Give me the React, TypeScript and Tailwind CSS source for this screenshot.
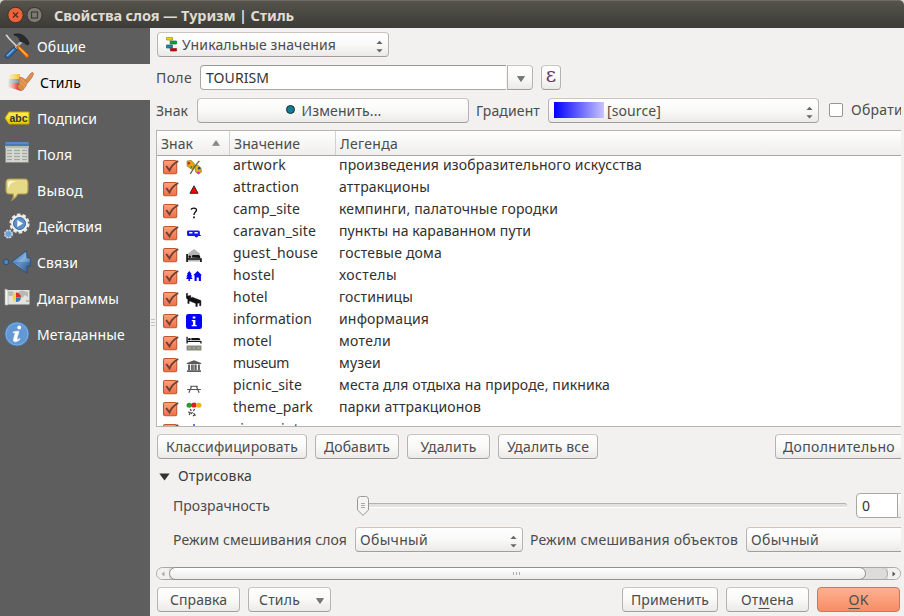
import { useLayoutEffect, useRef, useState, type ReactNode } from "react";

/** A single-line label whose letter spacing is adjusted to fill a given width. */
function Label({ text, w, className = "", children }: { text?: string; w: number; className?: string; children?: ReactNode }) {
  const ref = useRef<HTMLSpanElement>(null);
  const [spacing, setSpacing] = useState(0);
  useLayoutEffect(() => {
    const el = ref.current;
    if (!el) return;
    el.style.letterSpacing = "0px";
    const natural = el.getBoundingClientRect().width;
    const count = (el.textContent || "").length || 1;
    const next = (w - natural) / count;
    el.style.letterSpacing = next + "px";
    setSpacing(next);
  }, [w]);
  return (
    <span ref={ref} style={{ letterSpacing: spacing }} className={"inline-block shrink-0 whitespace-pre " + className}>
      {children ?? text}
    </span>
  );
}

const buttonFace =
  "shrink-0 border border-[#b5b2ae] border-t-[#cbc4be] border-b-[#a19e9a] rounded-[4px] bg-linear-to-b from-white via-[#f9f9f8] to-[#ebeae8] shadow-[0_0_0_1px_#f5f4f3]";

function Button({ className = "", children }: { className?: string; children: ReactNode }) {
  return <div className={`flex h-[25px] items-center justify-center ${buttonFace} ${className}`}>{children}</div>;
}

function Spinner() {
  return (
    <svg className="ml-auto mt-1 h-[13px] w-[7px] shrink-0" viewBox="0 0 7 13" fill="#686562">
      <path d="M0.4 4L3.5 0.8L6.6 4zM0.4 9.2H6.6L3.5 12.4z" />
    </svg>
  );
}

function ToolsIcon() {
  return (
    <svg viewBox="0 0 26 26" className="h-[26px] w-[26px]">
      <path d="M1.5 2.2L3 1.5L5.5 5L14 13.5L13 14.5L4.5 6z" fill="#e3e6e8" stroke="#999" strokeWidth=".5" />
      <path d="M17.8 6.5L19.8 8L12 16.5L10.2 15z" fill="#b9bdbf" />
      <path d="M12.5 14L14.5 12.2L25 22Q25.5 24.5 22.5 25z" fill="#f57900" stroke="#a84900" strokeWidth=".8" />
      <path d="M15 14.5L23 22.5" stroke="#ffb35b" strokeWidth="1.2" />
      <path d="M10 14L13 16.8L4.8 25Q1 26 .8 22.5z" fill="#3267a5" stroke="#173d71" strokeWidth=".8" />
      <path d="M9.8 16.3L3 23" stroke="#79aee2" strokeWidth="1.4" />
      <path d="M10 1.2Q16-.2 20 3L23 6L25 10.5Q24 12.8 22.5 11.5L20 9.5L16 8.5L15 5Q13 2.5 10 2z" fill="#272c2d" stroke="#111" strokeWidth=".5" />
    </svg>
  );
}

function BrushIcon() {
  return (
    <svg viewBox="0 0 26 20" className="h-[20px] w-[26px]">
      <defs>
        <linearGradient id="paint"><stop stopColor="#ff8d83" stopOpacity=".15" /><stop offset=".6" stopColor="#e8453c" /></linearGradient>
        <linearGradient id="yellowPaint"><stop stopColor="#ffdf72" stopOpacity=".3" /><stop offset="1" stopColor="#f4bd2d" /></linearGradient>
        <linearGradient id="bluePaint"><stop stopColor="#8b9aba" stopOpacity=".2" /><stop offset="1" stopColor="#7686ac" /></linearGradient>
      </defs>
      <path d="M2 2H12V7H1z" fill="url(#yellowPaint)" />
      <path d="M1 7H12V11H.5z" fill="url(#bluePaint)" />
      <path d="M.5 11H12L16 16L13 19L0 15z" fill="url(#paint)" />
      <path d="M17 8.5L23 1Q25.5-.5 25.5 2Q24.5 6 19.5 11z" fill="#dc914f" stroke="#b06a34" strokeWidth=".6" />
      <path d="M12 5Q16 5.5 19.5 10L18 14L15 18Q11 19 9.5 14Q12 13 11 9z" fill="#dc8c49" stroke="#b86f38" strokeWidth=".6" />
      <path d="M13 7L18.5 12.5M12 10L17 14.5" stroke="#efb276" strokeWidth=".8" />
    </svg>
  );
}

function LabelTagIcon() {
  return (
    <span className="relative flex h-[14px] w-[26px] items-center">
      <svg viewBox="0 0 26 14" className="absolute inset-0 h-[14px] w-[26px]">
        <defs><linearGradient id="tag" x2="0" y2="1"><stop stopColor="#fff15b" /><stop offset="1" stopColor="#e6cb00" /></linearGradient></defs>
        <path d="M1 7L5 1H25V13H5z" fill="url(#tag)" stroke="#c5a300" />
      </svg>
      <span className="relative ml-[5.5px] -mt-px font-['Liberation_Sans'] text-[10.5px] font-bold leading-[12px] text-[#333]">abc</span>
    </span>
  );
}

function TableIcon() {
  return (
    <svg viewBox="0 0 24 21" className="-mt-[3px] h-[21px] w-6">
      <path d="M.5.5H23.5V20.5H.5z" fill="#cfd1cb" stroke="#8b8d87" />
      <path d="M0 0H24V4H0z" fill="#4779b5" /><path d="M1 1H23" stroke="#6f9fd4" />
      <path d="M0 4H24V6H0z" fill="#b7bab4" />
      <path d="M2 8.5H7M9 8.5H15M17 8.5H22M2 11.5H7M9 11.5H15M17 11.5H22M2 14.5H7M9 14.5H15M17 14.5H22M2 17.5H7M9 17.5H15M17 17.5H22" stroke="#a3a69f" />
      <path d="M8 6V20M16 6V20" stroke="#e4e5e1" strokeWidth=".8" />
    </svg>
  );
}

function BubbleIcon() {
  return (
    <svg viewBox="0 0 24 23" className="-mt-[2px] h-[23px] w-6">
      <path d="M4 1H20Q23 1 23 5V12Q23 16 20 16H13Q11 20 7 22Q9 19 8 16H4Q1 16 1 12V5Q1 1 4 1z" fill="#e6d987" stroke="#ad984c" strokeWidth="1.2" />
      <path d="M3 10V6Q3 3 6 3H12Q5 4 4 9z" fill="#fffbd8" />
    </svg>
  );
}

function ActionsIcon() {
  return (
    <svg viewBox="0 0 26 26" className="h-[26px] w-[26px]">
      <circle cx="15.5" cy="10.5" r="8.8" fill="none" stroke="#e8e8e6" strokeWidth="2.6" strokeDasharray="3.5 2.03" />
      <circle cx="15.5" cy="10.5" r="7.3" fill="#5f91c8" stroke="#eeeeed" strokeWidth="2.4" />
      <circle cx="15.5" cy="10.5" r="6" fill="none" stroke="#3465a4" />
      <path d="M13.3 7L19 10.5L13.3 14z" fill="#fff" />
      <circle cx="4.5" cy="21" r="3.8" fill="#729fcf" stroke="#d6dce3" strokeWidth="1.4" strokeDasharray="2 1" />
      <circle cx="4.5" cy="21" r="3.1" fill="#70a0d1" stroke="#a9c4e0" strokeWidth=".7" />
    </svg>
  );
}

function JoinIcon() {
  return (
    <svg viewBox="0 0 28 24" className="h-6 w-7">
      <defs><linearGradient id="joinBlue" x2="1" y2="1"><stop stopColor="#2b5d9b" /><stop offset=".5" stopColor="#86b2df" /><stop offset="1" stopColor="#28558e" /></linearGradient></defs>
      <circle cx="3.2" cy="12" r="2.7" fill="#5284b9" stroke="#274e7c" />
      <path d="M8.5 12L23.5.8L24 8H27.3V16H24V23.2z" fill="url(#joinBlue)" stroke="#214a7c" strokeWidth=".8" />
      <path d="M10 12H27V16H24V22z" fill="#21508b" opacity=".35" />
    </svg>
  );
}

function DiagramIcon() {
  return (
    <svg viewBox="0 0 26 18" className="-mt-[2px] h-[18px] w-[26px]">
      <path d="M3 2H25.5V16.5H3z" fill="#e2e3dd" />
      <path d="M4 4L8 3L10 5L8 8H5zM14 4L18 2.5L24 4L24 9L21 7L18 10L15 7zM22 12H25V14H22z" fill="#b6b9b1" />
      <path d="M1 1V17H4V2z" fill="#f4f4f1" stroke="#aaa" strokeWidth=".6" />
      <path d="M12 4.5A5 5 0 0 0 12 14z" fill="#f3d450" />
      <path d="M12 4.5A5 5 0 0 1 17 9.5H12z" fill="#dc302d" />
      <path d="M12 9.5H17A5 5 0 0 1 12 14z" fill="#397bb8" />
    </svg>
  );
}

function MetadataIcon() {
  return (
    <svg viewBox="0 0 26 26" className="h-[26px] w-[26px]">
      <circle cx="13" cy="13" r="12" fill="#6498d3" stroke="#3e77b4" />
      <circle cx="13" cy="13" r="11" fill="none" stroke="#82ade0" />
      <circle cx="15.2" cy="6.5" r="1.9" fill="#fff" />
      <path d="M9 11Q12 10 15 10.2L12.8 18.5Q13.5 19 16 17.5L15.5 19Q11 22 9.5 20Q9 19 11.3 11.8H9z" fill="#fff" stroke="#fff" strokeWidth=".5" />
    </svg>
  );
}

const navItems = [
  { label: "Общие", w: 49, icon: <ToolsIcon /> },
  { label: "Стиль", w: 41, icon: <BrushIcon />, selected: true },
  { label: "Подписи", w: 60, icon: <LabelTagIcon /> },
  { label: "Поля", w: 35, icon: <TableIcon /> },
  { label: "Вывод", w: 46, icon: <BubbleIcon /> },
  { label: "Действия", w: 65, icon: <ActionsIcon /> },
  { label: "Связи", w: 41, icon: <JoinIcon /> },
  { label: "Диаграммы", w: 82, icon: <DiagramIcon /> },
  { label: "Метаданные", w: 88, icon: <MetadataIcon /> },
];

const symbols: Record<string, ReactNode> = {
  artwork: (
    <>
      <path d="M1 1L5 .5L8 4L7 9L5 9L1 6z" fill="#dfaa16" stroke="#7b6412" strokeWidth=".6" />
      <path d="M8 6L11 5L14 8L14.5 12L12 14L9 12z" fill="#e2b01a" stroke="#7b6412" strokeWidth=".6" />
      <path d="M12.5 .8L8.5 6L4 14" stroke="#5a5d38" strokeWidth="1.2" />
      <circle cx="2.8" cy="3.3" r="1.2" fill="#d3212f" /><circle cx="12.3" cy="8.3" r="1.2" fill="#213cc0" /><circle cx="11.6" cy="12.8" r="1.3" fill="#df27ce" /><circle cx="5" cy="7" r=".9" fill="#278c35" />
    </>
  ),
  attraction: <path d="M7.5 3.8L11.3 11.3H3.7z" fill="#f00" stroke="#222" strokeWidth=".9" />,
  camp_site: <><path d="M5 5.8Q5.1 4.2 7.4 4.2Q10 4.2 9.8 6.2Q9.6 7.5 8.4 8.4Q7.5 9.1 7.5 11" fill="none" stroke="#111" strokeWidth="1.3" /><path d="M6.7 12.5H8.3V14.2H6.7z" fill="#111" /></>,
  caravan_site: <><path d="M2 4.5H11.5Q13 4.5 13 6V9H14V10H11.5A1.8 1.8 0 0 1 8 10H2Q1 10 1 9V5.5Q1 4.5 2 4.5z" fill="#1414ff" /><path d="M3 6H6V7.5H3zM8 6H11V7.5H8z" fill="#fff" /></>,
  guest_house: <><path d="M2 5.5L7.5 1L13 5.5V13.5H2z" fill="#b4b4b4" /><path d="M1 6V14M1 11H14V14" stroke="#111" strokeWidth="1.6" /><path d="M5.5 9.5L6 7H12Q13.5 7.5 13.5 10z" fill="#111" /><circle cx="3.5" cy="8.8" r="1.2" fill="#111" /></>,
  hostel: <path d="M3 1L5.3 4H4.5L6 6.5H4.7L6.2 9H3.7V11H2.3V9H0L1.5 6.5H.3L1.7 4H.9zM10.8 1L15 5.2H14V11H12V7.5H10V11H8V5.2H6.8z" fill="#00f" />,
  hotel: <path d="M.2 1.5L1.5 1.3V4L4.5 3.4V6L6 5.2L14 8.6V13.7H12.7V10.8L10.6 11.5V14.5H9.2V11.4L3 8.8V11.5H1.7V7.5L.2 6z" fill="#111" stroke="#111" strokeWidth=".4" />,
  information: <><rect width="15" height="15" rx="2.2" fill="#00f" /><path d="M6.3 2.5H8.8V4.5H6.3zM5.4 6H8.8V11H10V12.3H5.3V11H6.5V7.2H5.4z" fill="#fff" /></>,
  motel: <><path d="M1 .8V7.5M1 5.5H14V7.5" stroke="#111" strokeWidth="1.2" /><path d="M5 4.2V2H12Q13.5 2.5 13.5 4.2z" fill="#111" /><circle cx="3.2" cy="3.2" r="1.2" fill="#111" /><path d="M.5 9.5H14.5V14.5H.5z" fill="#888" /><path d="M2 12H4.5M6.5 12H8.5M10.5 12H13" stroke="#d0c64c" strokeWidth=".9" /></>,
  museum: <path d="M.8 5L7.5 2.2L14.2 5V6H.8zM2 6.5H3.8V12H2zM4.8 6.5H6.4V12H4.8zM8.4 6.5H10V12H8.4zM11.2 6.5H13V12H11.2zM6.8 6.5H8V12H6.8zM1 12.3H14V14H1z" fill="#5a5a5a" />,
  picnic_site: <path d="M4 6.2H11M1 9.5H14M5.3 6.2L2.7 12.8M9.7 6.2L12.3 12.8" stroke="#555" strokeWidth="1.1" fill="none" />,
  theme_park: (
    <>
      <circle cx="3" cy="3.2" r="2.5" fill="#269d27" /><circle cx="7.5" cy="3" r="2.6" fill="#e21e25" /><circle cx="12" cy="3.2" r="2.5" fill="#efb01e" />
      <path d="M4 7L5 9M8 7L7 9M2 10L4 10.5L3 13M5 12L6 10M7 11L9 13.5M6.5 14L8 13" stroke="#333" strokeWidth="1" fill="none" />
    </>
  ),
  viewpoint: <path d="M7.5 0V5M3 2.5L5 5M12 2.5L10 5" stroke="#3c3cf2" strokeWidth="1.4" />,
};

const rows: [string, number, string, number][] = [
  ["artwork", 53, "произведения изобразительного искусства", 303],
  ["attraction", 66, "аттракционы", 91],
  ["camp_site", 67, "кемпинги, палаточные городки", 219],
  ["caravan_site", 83, "пункты на караванном пути", 192],
  ["guest_house", 85, "гостевые дома", 103],
  ["hostel", 42, "хостелы", 58],
  ["hotel", 35, "гостиницы", 74],
  ["information", 79, "информация", 90],
  ["motel", 39, "мотели", 52],
  ["museum", 56, "музеи", 42],
  ["picnic_site", 69, "места для отдыха на природе, пикника", 271],
  ["theme_park", 80, "парки аттракционов", 142],
  ["viewpoint", 66, "", 0],
];

function CheckedBox() {
  return (
    <svg viewBox="0 0 17 16" className="h-4 w-[17px] shrink-0">
      <defs><linearGradient id="check" x2="0" y2="1"><stop stopColor="#ffa27c" /><stop offset="1" stopColor="#ee7048" /></linearGradient></defs>
      <rect x="1.5" y="1.5" width="13.2" height="13.2" rx="1.5" fill="url(#check)" stroke="#c2562f" strokeWidth="1.1" />
      <path d="M4.2 7L7.5 11.3Q10 5.5 16.2 2" fill="none" stroke="#6d4030" strokeWidth="1.9" />
    </svg>
  );
}

function TitleBar() {
  return (
    <header className="flex h-7 items-center rounded-t-[5px] border-t border-[#6b6a63] bg-linear-to-b from-[#55534b] to-[#3c3b37] pl-[7px]">
      <svg viewBox="0 0 36 18" className="h-[18px] w-9">
        <circle cx="8.5" cy="9" r="7.7" fill="#ee633c" stroke="#35322d" />
        <path d="M6 6.5L11 11.5M11 6.5L6 11.5" stroke="#5d2919" strokeWidth="1.3" />
        <circle cx="27.5" cy="9" r="7.6" fill="#7e7b73" stroke="#35342f" />
        <rect x="24.5" y="6" width="6" height="6" fill="none" stroke="#3c3b36" strokeWidth="1.2" />
      </svg>
      <Label text="Свойства слоя — Туризм | Стиль" w={240} className="ml-[11px] text-[14.5px] font-bold text-[#dfdbd2]" />
    </header>
  );
}

export default function App() {
  return (
    <div className="h-[616px] w-[904px] overflow-hidden bg-[#d8d8d8] font-['Noto_Sans','Open_Sans',sans-serif] text-[14px] leading-5 text-[#4c4c4c]">
      <TitleBar />
      <div className="flex h-[588px] bg-[#f2f1f0]">
        <nav className="w-[150px] shrink-0 bg-[#5e5e5e]">
          {navItems.map((n) => (
            <div key={n.label} className={`flex h-9 items-center ${n.selected ? "bg-[#f2f1f0] pl-[5px] text-black" : "pl-[2px] text-white"}`}>
              <span className={`flex w-[35px] shrink-0 justify-center ${n.selected ? "pr-1" : "pr-[5px]"}`}>
                <span className="flex shrink-0 items-center">{n.icon}</span>
              </span>
              <Label text={n.label} w={n.w} className="mt-px" />
            </div>
          ))}
        </nav>
        <div className="flex w-1.5 shrink-0 flex-col items-end justify-start gap-[2px] pt-[291px] pr-[1px]">
          <i className="h-px w-1 bg-[#c5c3c0]" /><i className="h-px w-1 bg-[#c5c3c0]" /><i className="h-px w-1 bg-[#c5c3c0]" />
        </div>
        <main className="w-[745px] shrink-0 overflow-hidden">
          <div className="pt-1 pl-px">
            <div className={`flex h-[25px] w-[232px] items-center pl-2 pr-[5px] ${buttonFace}`}>
              <svg viewBox="0 0 12 16" className="mr-[4px] mb-0.5 h-4 w-3 shrink-0">
                <path d="M4 3V14H7" fill="none" stroke="#999" strokeWidth=".7" />
                <path d="M.5 1.5H6.5V4H.5z" fill="#f5d700" stroke="#a58b00" strokeWidth=".7" /><path d="M4.5 5H10.5V8H4.5z" fill="#00a33c" stroke="#087733" strokeWidth=".7" /><path d="M.5 9H6.5V12H.5z" fill="#148b9b" stroke="#176676" strokeWidth=".7" /><path d="M4.5 12.5H10.5V15H4.5z" fill="#c9000d" stroke="#8c1717" strokeWidth=".7" />
              </svg>
              <Label text="Уникальные значения" w={154} /><Spinner />
            </div>
          </div>

          <div className="mt-2 flex h-[25px] items-center">
            <Label text="Поле" w={36} className="mr-2" />
            <div className="flex h-[25px] w-[308px] items-center rounded-l-[4px] border border-[#aaa7a3] border-t-[#9a9895] bg-white pl-[5px] text-[#333]"><Label text="TOURISM" w={63} /></div>
            <div className={`-ml-px flex h-[25px] w-[26px] items-center justify-center rounded-l-none! pl-[2px] ${buttonFace}`}>
              <svg viewBox="0 0 8 6" className="mt-[3px] h-1.5 w-2"><path d="M.5.5H7.5L4 5.5z" fill="#777" stroke="#555" strokeWidth=".6" /></svg>
            </div>
            <Button className="ml-2 w-5"><span className="-mt-[5px] font-['DejaVu_Serif'] text-[20px] text-[#61396a]">ε</span></Button>
          </div>

          <div className="mt-2 flex h-[25px] items-center">
            <Label text="Знак" w={32} className="mr-[9px]" />
            <Button className="w-[272px] pl-px"><i className="mr-[7px] mb-[2px] h-[9px] w-[9px] rounded-full border border-[#182b31] bg-[#167d91]" /><Label text="Изменить..." w={80} /></Button>
            <Label text="Градиент" w={64} className="ml-[7px] mr-2" />
            <div className={`flex h-[25px] w-[271px] items-center pl-[5px] pr-[5px] ${buttonFace}`}>
              <i className="-mt-px mr-[3px] h-4 w-[50px] bg-linear-to-r/srgb from-[#0000ff] to-[#c8c4ff]" /><Label text="[source]" w={54} /><Spinner />
            </div>
            <i className="-mt-[2px] ml-[10px] mr-[8px] h-[14px] w-[14px] shrink-0 rounded-[2px] border border-[#979592] bg-white" />
            <Label text="Обрати" w={52} className="-mt-px" />
          </div>

          <section className="mt-[7px] h-[297px] overflow-hidden border border-r-0 border-[#b9b4af] bg-white">
            <div className="flex h-[25px] items-center border-b border-[#aaa7a4] bg-linear-to-b from-white to-[#efeeed]">
              <div className="flex h-full w-[73px] items-center border-r border-[#d3d1ce] pl-1">
                <Label text="Знак" w={32} className="mt-[2px]" />
                <svg viewBox="0 0 8 6" className="ml-[19px] h-1.5 w-2"><path d="M.5 5.5H7.5L4 .5z" fill="#8b8987" stroke="#777" strokeWidth=".5" /></svg>
              </div>
              <div className="flex h-full w-[106px] items-center border-r border-[#d3d1ce] pl-1"><Label text="Значение" w={66} className="mt-[2px]" /></div>
              <Label text="Легенда" w={58} className="mt-[2px] ml-[4px]" />
            </div>
            {rows.map(([value, vw, legend, lw]) => (
              <div key={value} className="flex h-[22px] items-start text-[#303030]">
                <div className="flex w-[76px] items-center pl-[5px] pt-[3px]">
                  <CheckedBox />
                  <svg viewBox="0 0 15 15" preserveAspectRatio="none" fill="none" className="ml-[7px] h-[15px] w-4">{symbols[value]}</svg>
                </div>
                <div className="flex w-[106px]"><Label text={value} w={vw} className="-mt-px" /></div>
                {legend && <Label text={legend} w={lw} className="-mt-px" />}
              </div>
            ))}
          </section>

          <div className="mt-[7px] flex gap-2 pl-px">
            <Button className="w-[150px]"><Label text="Классифицировать" w={132} /></Button>
            <Button className="w-[84px]"><Label text="Добавить" w={66} /></Button>
            <Button className="w-[83px]"><Label text="Удалить" w={56} /></Button>
            <Button className="w-[100px]"><Label text="Удалить все" w={82} /></Button>
            <Button className="ml-[169px] w-[150px] justify-start! pl-[7px]"><Label text="Дополнительно" w={112} /></Button>
          </div>

          <div className="mt-[7px] flex h-5 items-center pl-[3px] text-[#3c3c3c]">
            <svg viewBox="0 0 11 8" className="mt-[2px] mr-2 h-2 w-[11px]"><path d="M.3.5H10.7L5.5 7.5z" fill="#333" /></svg>
            <Label text="Отрисовка" w={74} />
          </div>

          <div className="mt-[7px] flex h-[25px] items-center pl-[17px]">
            <Label text="Прозрачность" w={97} />
            <svg viewBox="0 0 12 20" className="ml-[87px] h-5 w-3 shrink-0">
              <path d="M.5 3.5Q.5.5 3.5.5H8.5Q11.5.5 11.5 3.5V14L6 19.3L.5 14z" fill="#f5f4f3" stroke="#9a9793" /><path d="M4 7.5H8M4 9.5H8M4 11.5H8" stroke="#aaa" />
            </svg>
            <div className="h-[5px] w-[478px] shrink-0 rounded-r border-t border-b border-t-[#b4b2af] border-b-white bg-[#e2e1df]" />
            <div className="ml-[9px] flex h-[25px] w-[42px] shrink-0 items-center rounded-l-[4px] border border-[#aaa7a3] bg-white pl-[5px] text-[#333]"><Label text="0" w={8} /></div>
            <div className="h-[25px] w-5 shrink-0 border-y border-[#bbb8b4] bg-linear-to-b from-white to-[#ecebea]" />
          </div>

          <div className="mt-[9px] flex h-[25px] items-center pl-[17px]">
            <Label text="Режим смешивания слоя" w={174} className="mr-2" />
            <div className={`flex h-[25px] w-[168px] items-center pl-1 pr-[5px] ${buttonFace}`}><Label text="Обычный" w={68} /><Spinner /></div>
            <Label text="Режим смешивания объектов" w={208} className="ml-[7px] mr-2" />
            <div className={`flex h-[25px] w-[180px] items-center pl-1 ${buttonFace}`}><Label text="Обычный" w={68} /></div>
          </div>

          <div className="mt-[15px] flex h-[13px] items-center rounded-full border border-[#aaa8a4] bg-[#dddcda]">
            <div className="flex h-full w-3 shrink-0 items-center justify-center rounded-l-full bg-[#f2f1f0]"><svg viewBox="0 0 4 6" className="h-1.5 w-1"><path d="M3.5.5V5.5L.5 3z" fill="#aaa" /></svg></div>
            <div className="flex h-[13px] w-[697px] shrink-0 items-center justify-center gap-[2px] rounded-full border border-[#92908d] bg-linear-to-b from-white to-[#ecebea] pr-[3px]"><i className="h-[3px] w-px bg-[#aaa]" /><i className="h-[3px] w-px bg-[#aaa]" /><i className="h-[3px] w-px bg-[#aaa]" /></div>
            <div className="h-[11px] w-[22px] rounded-r-full border-r border-[#aaa8a4]" />
            <div className="flex h-full flex-1 items-center justify-center rounded-r-full bg-[#f2f1f0]"><svg viewBox="0 0 4 6" className="h-1.5 w-1"><path d="M.5.5L3.5 3L.5 5.5z" fill="#555" /></svg></div>
          </div>

          <footer className="mt-[7px] flex pl-px">
            <Button className="w-[83px]"><Label text="Справка" w={57} /></Button>
            <Button className="ml-2 w-[83px] justify-start! pl-[10px]"><Label text="Стиль" w={41} /><svg viewBox="0 0 8 6" className="mt-0.5 ml-[16px] h-1.5 w-2"><path d="M.5.5H7.5L4 5.5z" fill="#777" stroke="#555" strokeWidth=".6" /></svg></Button>
            <Button className="ml-[291px] w-24"><Label text="Применить" w={78} /></Button>
            <Button className="ml-2 w-[83px]"><Label w={53}>От<span className="underline underline-offset-[3px]">м</span>ена</Label></Button>
            <div className="ml-2 flex h-[25px] w-[83px] items-center justify-center rounded-[4px] border border-[#bd7c61] bg-linear-to-b from-[#ffb092] to-[#f68d64]"><Label w={20}><span className="underline underline-offset-[3px]">O</span>K</Label></div>
          </footer>
        </main>
      </div>
    </div>
  );
}
